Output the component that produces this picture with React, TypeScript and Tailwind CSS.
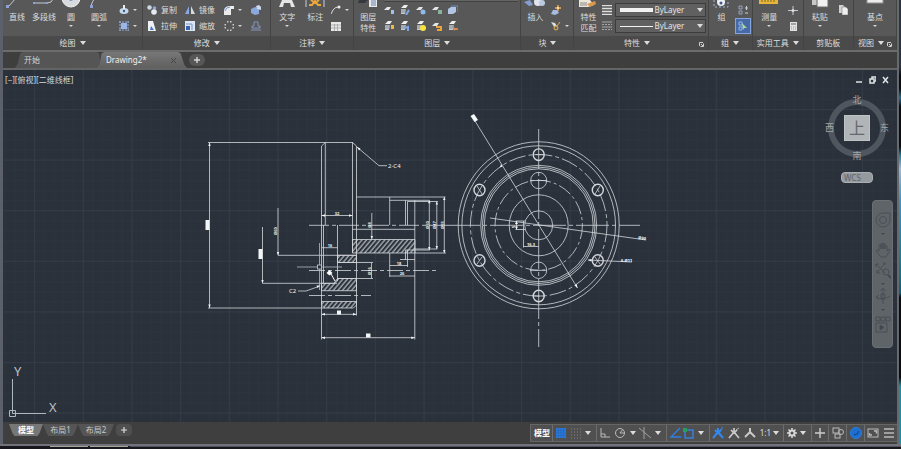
import type { ReactNode } from 'react';

const INK = '#d4d8dc';

function Caret() {
  return <span aria-hidden="true" className="h-0 w-0 shrink-0 border-x-2 border-t-2 border-x-transparent border-t-[#d6d6d6]" />;
}

function TitleCaret() {
  return <span aria-hidden="true" className="h-0 w-0 shrink-0 border-x-3 border-t-4 border-x-transparent border-t-[#dcdcdc]" />;
}

function Launcher() {
  return (
    <svg width="5" height="5" viewBox="0 0 5 5" className="absolute right-1 top-1.5" aria-hidden="true">
      <path d="M0.5 0.5H4M0.5 0.5V4M1.5 4.5H4.5V1.5M2 2L4 4" stroke="#cfcfcf" fill="none" />
    </svg>
  );
}

type PanelProps = { title: string; className: string; caret?: boolean; launcher?: boolean; children: ReactNode };

function Panel({ title, className, caret = true, launcher = false, children }: PanelProps) {
  return (
    <section className={`flex shrink-0 grow flex-col border-r border-[#444444] ${className}`}>
      <div className="flex h-9 overflow-hidden bg-[#585858]">{children}</div>
      <h2 className={`relative flex h-3.5 items-center justify-center bg-[#4a4a4a] ${launcher ? 'gap-1 pr-2' : 'gap-1'}`}>
        {title}
        {caret && <TitleCaret />}
        {launcher && <Launcher />}
      </h2>
    </section>
  );
}

type BigProps = { label: string; second?: string; caret?: boolean; className?: string; children: ReactNode };

function Big({ label, second, caret = false, className = 'w-7', children }: BigProps) {
  return (
    <button type="button" className={`flex shrink-0 flex-col items-center whitespace-nowrap ${className}`}>
      <svg width="24" height="11" viewBox="0 0 24 11" className="shrink-0" aria-hidden="true">{children}</svg>
      <span className="leading-3">{label}</span>
      {second && <span className="leading-2.5">{second}</span>}
      {caret && <span className="flex h-1 items-end"><Caret /></span>}
    </button>
  );
}

type SmallProps = { name: string; text?: string; caret?: boolean; active?: boolean; children: ReactNode };

function Small({ name, text, caret = false, active = false, children }: SmallProps) {
  return (
    <button type="button" aria-label={name} className={`flex h-4 items-center gap-1 whitespace-nowrap ${active ? 'border border-[#86a5dc] bg-[#4769a8] px-0.5' : ''}`}>
      <svg width="10" height="10" viewBox="0 0 10 10" className="shrink-0" aria-hidden="true">{children}</svg>
      {text}
      {caret && <Caret />}
    </button>
  );
}

function Column({ className = '', children }: { className?: string; children: ReactNode }) {
  return <div className={`flex shrink-0 flex-col items-start pt-0.5 ${className}`}>{children}</div>;
}

function Stack({ accent }: { accent: ReactNode }) {
  return (
    <>
      <path d="M1 3L4 0H8L6 3Z" fill="#eceff3" />
      <path d="M1 4H6L5 9H1Z" fill="#c3c9d1" />
      <path d="M1 5H6M1 7H5" stroke="#6d737c" strokeWidth="0.7" fill="none" />
      {accent}
    </>
  );
}

function Sheet({ accent }: { accent: ReactNode }) {
  return (
    <>
      <path d="M0 5L3 2H7L5 5Z" fill="#e2e6ea" />
      {accent}
    </>
  );
}

function LineSelect({ name, thick }: { name: string; thick: boolean }) {
  return (
    <label className="flex h-3.5 items-center gap-0.5 border border-[#3c3c3c] bg-[#606060] pl-1 pr-0.5">
      <span aria-hidden="true" className={`grow bg-[#f2f2f2] ${thick ? 'h-1' : 'h-px'}`} />
      <select aria-label={name} className="w-8 appearance-none bg-transparent leading-3 text-[#e6e6e6] outline-none">
        <option>ByLayer</option>
      </select>
      <span className="w-1.5" />
      <TitleCaret />
    </label>
  );
}

function Ribbon() {
  return (
    <header className="flex border-b-2 border-[#6c6c6c] text-[#dedede]">
      <Panel title="绘图" className="basis-[140px]">
        <Big label="直线"><path d="M3 7L12 -3" stroke="#c4cad6" /><rect x="1" y="5" width="3" height="3" fill="#8ca2d4" /></Big>
        <Big label="多段线" className="w-[26px]"><path d="M1 3H15Q20 3 21 -1" stroke="#c4cad6" fill="none" /><rect x="1" y="2" width="2" height="2" fill="#8ca2d4" /><rect x="14" y="2" width="2" height="2" fill="#8ca2d4" /></Big>
        <Big label="圆" caret><circle cx="12" cy="-2" r="9" fill="#d8dade" stroke="#f0f0f0" /><circle cx="12" cy="-1" r="2" fill="#7d95cf" /></Big>
        <Big label="圆弧" caret><path d="M4 6Q5 1 9 -3" stroke="#c4cad6" fill="none" /><rect x="3" y="5" width="3" height="3" fill="#8ca2d4" /></Big>
        <Column className="pl-1.5">
          <Small name="椭圆" caret><ellipse cx="5" cy="6" rx="4.5" ry="3" fill="#c6d8e8" /><circle cx="5" cy="6" r="1.2" fill="#3c5f96" /><path d="M5 0V4" stroke="#e6edf5" strokeWidth="2" /></Small>
          <Small name="图案填充" caret><rect x="2" y="2" width="6" height="6" fill="#9ab6e8" /><path d="M1 0V10M9 0V10M0 1H10M0 9H10" stroke="#8fabdc" strokeDasharray="2 1" /></Small>
        </Column>
      </Panel>

      <Panel title="修改" className="basis-[128px]">
        <Column className="w-[42px] pl-1">
          <Small name="复制" text="复制"><circle cx="2.5" cy="2.5" r="2.3" fill="#cdd6e3" /><circle cx="7.5" cy="3" r="1.8" fill="#8aa8dc" /><circle cx="7" cy="7" r="2.8" fill="#e6ebf2" /></Small>
          <Small name="拉伸" text="拉伸"><path d="M1 0H6L9 10H1Z" fill="#eef1f5" /><path d="M4 5L7 9H3Z" fill="#4c74c2" /></Small>
        </Column>
        <Column className="w-[39px]">
          <Small name="镜像" text="镜像"><path d="M4 1V9H0Z" fill="#88a9e2" /><path d="M6 1V9H10Z" fill="#d7dbe1" /></Small>
          <Small name="缩放" text="缩放"><rect x="0" y="0" width="10" height="10" fill="#dbe5f6" /><rect x="1" y="5" width="4" height="4" fill="#3762b0" /><path d="M1 3H7V9" stroke="#7394cc" fill="none" /></Small>
        </Column>
        <Column className="w-[27px]">
          <Small name="圆角" caret><path d="M0 10V5Q1 1 6 1H10V4H7V10Z" fill="#ebebeb" /><path d="M1 6Q2 2 6 2" stroke="#7195d6" fill="none" /></Small>
          <Small name="阵列" caret><g fill="#cccccc"><rect x="3" y="0" width="1.5" height="1.5" /><rect x="6" y="0" width="1.5" height="1.5" /><rect x="0.5" y="3" width="1.5" height="1.5" /><rect x="8.500" y="3" width="1.5" height="1.5" /><rect x="0.5" y="6" width="1.5" height="1.5" /><rect x="8.5" y="6" width="1.5" height="1.5" /><rect x="3" y="8.500" width="1.5" height="1.5" /><rect x="6" y="8.5" width="1.5" height="1.5" /></g></Small>
        </Column>
        <Column>
          <Small name="分解"><path d="M0 4L4 2L8 4V9L4 10L0 8Z" fill="#8aa8dc" /><path d="M5 1L8 0L10 2V5L6 4Z" fill="#ced9ec" /></Small>
          <Small name="偏移"><path d="M3 1H7V5H9V7H1V5H3Z" stroke="#8495c0" fill="none" /><path d="M0 9H10" stroke="#8495c0" /></Small>
        </Column>
      </Panel>

      <Panel title="注释" className="basis-[83px]">
        <Big label="文字" caret className="w-8"><path d="M4 7L10 -7H14L20 7H16L15 3H9L8 7Z" fill="#e4e4e4" /></Big>
        <Big label="标注" className="w-6"><path d="M3 -2V7M21 -2V7" stroke="#c8cdd5" /><path d="M6 5H9L12 1L15 5H18M8 0L12 3L16 0" stroke="#eaa83c" strokeWidth="2" fill="none" /></Big>
        <Column className="pl-1">
          <Small name="引线" caret><path d="M0 9L2 5Q4 2 7 2" stroke="#dadada" fill="none" /><circle cx="8" cy="2" r="1.5" fill="#eeeeee" /></Small>
          <Small name="表格"><rect y="1" width="10" height="9" fill="#e9e9e9" /><path d="M0 4H10M0 7H10M3.5 3V10M6.5 3V10" stroke="#989898" strokeWidth="0.7" /></Small>
        </Column>
      </Panel>

      <Panel title="图层" className="basis-[167px]">
        <Big label="图层" second="特性"><path d="M3 0H12L9 3H2Z" fill="#35383d" /><rect x="13" y="-3" width="8" height="10" fill="#e6e8eb" /><path d="M15 1H20M15 3H20M15 5H20" stroke="#6984ad" /></Big>
        <div className="grow pl-0.5">
          <div className="mr-0.5 h-0.5 border-b border-[#424242] bg-[#656565]" />
          <div className="flex w-20 flex-wrap gap-x-1.5">
            <Small name="关闭图层"><Sheet accent={<rect x="7" y="5" width="3" height="4" fill="#9fc3ee" />} /></Small>
            <Small name="隔离"><Stack accent={<path d="M6 10L9 5" stroke="#7ea7e5" strokeWidth="2" />} /></Small>
            <Small name="冻结"><Sheet accent={<circle cx="7" cy="7" r="2.5" fill="#92b9ec" />} /></Small>
            <Small name="锁定"><Sheet accent={<rect x="6" y="5" width="4" height="4" fill="#87b39f" />} /></Small>
            <Small name="置为当前"><path d="M0 4L3 2H8V7L5 9H0Z" fill="#b2c5e4" /><path d="M3 1H10V7" stroke="#6b8fc9" fill="none" /></Small>
            <Small name="打开图层"><Stack accent={<rect x="7" y="4" width="3" height="4" fill="#f0b847" />} /></Small>
            <Small name="取消隔离"><Stack accent={<path d="M4 7L8 6V10" stroke="#7ea7e5" strokeWidth="2" fill="none" />} /></Small>
            <Small name="解冻"><Stack accent={<circle cx="7" cy="7" r="3" fill="#f8e33e" />} /></Small>
            <Small name="解锁"><Sheet accent={<path d="M4 6H9V9H5" stroke="#eaa63a" strokeWidth="2" fill="none" />} /></Small>
            <Small name="匹配图层"><Stack accent={<path d="M5 7L10 8L6 9Z" stroke="#e18b52" fill="#e18b52" />} /></Small>
          </div>
        </div>
      </Panel>

      <Panel title="块" className="basis-[53px]">
        <Big label="插入"><path d="M1 2L7 0L10 5L6 6Z" fill="#849dcc" /><circle cx="15" cy="2" r="4" fill="#dfe5ef" /><circle cx="19" cy="3" r="3" fill="#bdc9df" /></Big>
        <Column className="pl-0.5">
          <Small name="创建"><path d="M0 9L2 5H6L8 8L4 10Z" fill="#a7bce2" /><path d="M7 0V6M4 3H10" stroke="#f4a94b" strokeWidth="1.5" /><circle cx="7" cy="3" r="1" fill="#fff3d0" /></Small>
          <Small name="编辑块" caret><path d="M0 1L4 2L7 7L5 9Z" fill="#d9dde4" /><circle cx="5" cy="7" r="2" stroke="#e6af4f" fill="#656565" /><path d="M6 5L9 1" stroke="#e6af4f" /></Small>
        </Column>
      </Panel>

      <Panel title="特性" className="basis-[134px]" launcher>
        <Big label="特性" second="匹配"><path d="M3 0H14L18 5L12 7H3Z" fill="#eee7d9" /><path d="M4 3H11M4 5H11" stroke="#8a8a8a" /><path d="M11 4L19 1L20 4L14 7Z" fill="#dc984c" /></Big>
        <Column className="w-[13px]">
          <Small name="线宽列表"><path d="M0 0.5H10M0 3.500H10M0 6.500H10M0 9.500H10" stroke="#dfdfdf" strokeWidth="1.5" /></Small>
          <Small name="线型列表"><path d="M0 1H10M0 6H10" stroke="#a8a8a8" /><path d="M0 3.5H10M0 8.5H10" stroke="#a8a8a8" strokeDasharray="2 1" /></Small>
        </Column>
        <div className="flex grow flex-col gap-0.5 pr-0.5 pt-[3px]">
          <LineSelect name="线宽" thick />
          <LineSelect name="线型" thick={false} />
        </div>
      </Panel>

      <Panel title="组" className="basis-[44px]">
        <Big label="组" className="w-[26px]"><rect x="4" y="-4" width="14" height="11" stroke="#a0b4dc" strokeDasharray="2 2" fill="none" /><circle cx="11" cy="2" r="4" fill="#eceff3" /><circle cx="11" cy="3" r="1.5" fill="#445988" /></Big>
        <Column>
          <div className="pl-[3px]"><Small name="解除编组"><path d="M1 1H4V4H1ZM1 6H4V9H1Z" stroke="#94a2bf" fill="none" /><path d="M7 3H10M8.5 1V5M7 8H10" stroke="#c9cdd4" /></Small></div>
          <Small name="组选择" active><path d="M1 1H4V4H1ZM1 6H4V9H1Z" stroke="#8cb8e8" fill="none" /><path d="M4 2L9 7L6 7L5 9Z" fill="#a8df99" /></Small>
        </Column>
      </Panel>

      <Panel title="实用工具" className="basis-[51px]">
        <Big label="测量" caret className="w-[33px]"><rect x="2" y="-1" width="19" height="5" fill="#e7b638" /><path d="M5 -1V2M8 -1V2M11 -1V2M14 -1V2M17 -1V2" stroke="#7b6529" /></Big>
        <Column className="pl-0.5">
          <Small name="点坐标"><path d="M5 1V10M0 5.5H10" stroke="#c5c9cf" /><circle cx="5" cy="5.5" r="1.5" fill="#dcdcdc" /></Small>
          <Small name="快速计算器"><rect x="2" y="1" width="7" height="9" fill="#e2e2e2" /><path d="M3 3H8" stroke="#606060" /><path d="M3 6H8M3 8H8" stroke="#9a9a9a" strokeDasharray="1 1" /></Small>
        </Column>
      </Panel>

      <Panel title="剪贴板" className="basis-[50px]" caret={false}>
        <Big label="粘贴" caret className="w-8"><rect x="4" y="-4" width="11" height="9" fill="#c8c8c8" /><rect x="9" y="-2" width="11" height="9" fill="#f0f0f0" stroke="#686868" /></Big>
        <Column className="pl-0.5"><Small name="复制剪裁"><path d="M1 0H5L7 2V8H1Z" fill="#d0d0d0" /><path d="M4 2H8L10 4V10H4Z" fill="#eeeeee" stroke="#6a6a6a" strokeWidth="0.5" /></Small></Column>
      </Panel>

      <Panel title="视图" className="basis-[43px]" launcher>
        <Big label="基点" caret className="grow"><rect x="4" y="-3" width="16" height="6" fill="#ececec" stroke="#909090" /></Big>
      </Panel>
    </header>
  );
}

function FileTabs() {
  return (
    <nav aria-label="图形" className="flex h-[18px] shrink-0 items-end border-b-2 border-[#646464] bg-[#3e3e3e] pl-3 text-[#d4d4d4]">
      <button type="button" className="flex h-4 w-[86px] items-center bg-[#555555] pl-[9px] [clip-path:polygon(0_100%,3%_75%,6%_10%,9%_0,95%_0,98%_10%,100%_100%)]">开始</button>
      <button type="button" className="-ml-1 flex h-4 w-[90px] items-center justify-between bg-linear-to-b from-[#777777] to-[#606060] pl-[9px] pr-[11px] text-[#f0f0f0] [clip-path:polygon(0_100%,3%_75%,5%_10%,8%_0,90%_0,93%_10%,97%_80%,100%_100%)]">
        Drawing2*
        <svg width="5" height="5" viewBox="0 0 5 5" aria-hidden="true"><path d="M0 0L5 5M5 0L0 5" stroke="#454545" /></svg>
      </button>
      <button type="button" aria-label="新图形" className="ml-0.5 flex h-3 w-4 items-center justify-center self-center rounded-md bg-[#575757]">
        <svg width="6" height="6" viewBox="0 0 6 6" aria-hidden="true"><path d="M3 0V6M0 3H6" stroke="#d8d8d8" strokeWidth="1.4" /></svg>
      </button>
    </nav>
  );
}

function SideView() {
  return (
    <g>
      <g fill="url(#hatch)" stroke={INK} strokeWidth="0.8">
        <path d="M352.5 239.5H415V253H352.5Z" />
        <path d="M337.5 255.3H356.5V262.5H337.5Z" />
        <path d="M321.5 283.3H334L337.5 278.5H356.5V290.7H321.5Z" />
        <path d="M321.5 301.5H356.5V305L353.5 308H324.5L321.5 305Z" />
      </g>
      <path
        d="M208 142.5H353M208 308H325M209.5 142.5V308M321.5 146V339.5M325.3 142.5V225M321.5 146L325.3 142.5M352.5 142.5V253M356.5 146V315.5M352.5 142.5L356.5 146
        M321.5 215.5H352.5M323.5 225V283M337.5 225V281M352.5 229.3H415M356.5 197H445.5M389.7 197V225M389.7 200.3H429.5M405.5 200.3V225M407.5 201.3V225M407.5 201.5H438M414.8 200V339.5
        M429.3 200.3V250M436.8 201.5V249M444.3 197V253M405.5 250H430M415 249H437.5M415 253H446
        M371.8 213V239M278 208V255.3H356.5M262.5 227V283.3H337M321.5 247.7H337.5
        M337.5 262.5H373M337.5 278.5H373M371.5 262.5V278.5M321.5 314.3H356.5M321.5 337.7H415
        M389.7 253V277M405.5 250V260M407.5 250V267M400 259.5H415M389.7 265.5H407.5M389.7 276H415
        M357 147L379 165.7H387M298 291H306L320 286"
        fill="none" stroke={INK} strokeWidth="0.8"
      />
      <path d="M309 225.3H447" stroke={INK} strokeWidth="0.8" strokeDasharray="20 3 4 3" />
      <path d="M309 270.5H439M309 295.5H371" stroke={INK} strokeWidth="0.8" strokeDasharray="16 3 4 3" />
      <path d="M319.5 243V290M297 267H342" stroke="#b5bac0" strokeWidth="0.8" />
      <rect x="317.5" y="265" width="4" height="4" fill="#2a313b" stroke="#c8ccd0" strokeWidth="0.8" />
      <path d="M329.5 270L332.5 273L329.5 275.5L326.5 273Z" fill="#ffffff" />
      <path d="M331 274L335 281" stroke="#ffffff" />
      <g fill="#f4f5f6">
        <rect x="205.5" y="220" width="4" height="10" />
        <rect x="258.5" y="249" width="4" height="10" />
        <rect x="337" y="310.5" width="4" height="4" />
        <rect x="366" y="333.5" width="4.5" height="4" />
        <path d="M208.3 146L209.5 142.5L210.7 146ZM208.3 304.5L209.5 308L210.7 304.5ZM320 285.5L316.5 285.5L317.5 288ZM357 147L360.5 148.5L359 150.5Z" />
        <path d="M321.5 337.7L325 336.5V338.9ZM414.8 337.7L411.3 336.5V338.9ZM321.5 314.3L325 313.1V315.5ZM356.5 314.3L353 313.1V315.5ZM321.5 215.5L325 214.3V216.7ZM352.5 215.5L349 214.3V216.7Z" />
        <path d="M278 255.3L276.8 252H279.2ZM262.5 283.3L261.3 280H263.7ZM371.8 239L370.6 236H373ZM429.3 250L428.1 247H430.5ZM436.8 249L435.6 246H438ZM444.3 253L443.1 250H445.5ZM429.3 200.3L428.1 203.3H430.5ZM436.8 201.5L435.6 204.5H438ZM444.3 197L443.1 200H445.5Z" />
      </g>
      <g fill="#eef0f2" fontSize="6">
        <text x="388" y="168">2-C4</text>
        <text x="289" y="293">C2</text>
      </g>
      <g fill="#eef0f2" fontSize="4" fontWeight="bold" textAnchor="middle">
        <text x="337" y="215">32</text>
        <text x="330" y="247">16</text>
        <text x="399" y="265">18</text>
        <text x="402" y="275">26</text>
        <text transform="translate(277 231) rotate(-90)">Ø60</text>
        <text transform="translate(371 225) rotate(-90)">Ø8</text>
        <text transform="translate(371 271) rotate(-90)">Ø16</text>
        <text transform="translate(429 225) rotate(-90)">Ø50</text>
        <text transform="translate(436 225) rotate(-90)">Ø47</text>
        <text transform="translate(444 225) rotate(-90)">Ø55</text>
      </g>
    </g>
  );
}

const RINGS = [
  [80.5, 83.5],
  [76.8, 79.5],
  [58, 60],
  [56.3, 58.2],
  [54.5, 56.5],
  [29.5, 30.5],
  [14, 14.5],
];

const BOLTS = [
  [538.7, 154.7],
  [479.5, 190],
  [597.8, 190],
  [479.5, 260.5],
  [597.8, 260.5],
  [538.7, 296],
];

function FrontView() {
  return (
    <g fill="none" stroke={INK} strokeWidth="0.8">
      {RINGS.map(([rx, ry]) => (
        <ellipse key={rx} cx="538.7" cy="225.3" rx={rx} ry={ry} />
      ))}
      <ellipse cx="538.7" cy="225.3" rx="68.3" ry="70.8" strokeDasharray="17 3 4 3" />
      <ellipse cx="538.7" cy="225.3" rx="43.7" ry="45" strokeDasharray="14 3 3 3" />
      {BOLTS.map(([cx, cy]) => (
        <ellipse key={`${cx}-${cy}`} cx={cx} cy={cy} rx="5.5" ry="5.8" strokeWidth="1.4" />
      ))}
      <path d="M477 186L482 194M600 186L595 194M477 264L482 257M600 264L595 257M534 154.7H544M534 296H544M530 180.5H547M530 270.3H547" />
      <ellipse cx="538.7" cy="180.5" rx="8" ry="8.2" />
      <ellipse cx="538.7" cy="270.3" rx="8" ry="8.2" />
      <path d="M538.7 129V347" strokeDasharray="40 3 4 3" />
      <path d="M447 225.3H640" strokeDasharray="33 3 4 3" />
      <path d="M475 121L577.5 288M490 218L646 240M588 260L632 262" />
      <path d="M525 221H515.5M525 229.5H515.5M516.5 221V229.5M523.5 221V247.5M523.5 246.5H538.7" />
      <g fill="#f6f7f8" stroke="none">
        <path d="M470.5 116L474 114L478 120L474.5 122Z" />
        <path d="M577.5 288L574.5 285.5L576.7 284ZM588 260L591.5 259V261.5ZM501 164L500 167.5L502.5 166.5Z" />
        <path d="M516.5 221L515 224H518ZM516.5 229.5L515 226.5H518Z" />
        <g fontSize="4" fontWeight="bold">
          <text transform="translate(638 239) rotate(8)">Ø90</text>
          <text x="621" y="262">6-Ø11</text>
          <text x="527" y="246">16.3</text>
          <text transform="translate(515 228) rotate(-90)">5</text>
        </g>
      </g>
    </g>
  );
}

function ViewCube() {
  return (
    <div className="flex flex-col items-center text-[9px] leading-3 text-[#a1a6ab]">
      <div className="relative flex h-[68px] w-16 items-center justify-center">
        <div className="h-[58px] w-[58px] rounded-full border-6 border-[#50565e]" />
        <span className="absolute top-0">北</span>
        <span className="absolute bottom-0">南</span>
        <span className="absolute left-0">西</span>
        <span className="absolute right-0">东</span>
        <button type="button" className="absolute h-[26px] w-[26px] border border-[#bfc3c6] bg-[#b2b5b8] text-base leading-6 text-[#65686c]">上</button>
      </div>
      <button type="button" className="mt-2.5 flex h-[11px] w-8 items-center rounded-sm border border-[#abafb3] bg-[#959a9e] pl-0.5 text-[8px] text-[#5f646a]">WCS</button>
    </div>
  );
}

function NavButton({ name, caret = true, children }: { name: string; caret?: boolean; children: ReactNode }) {
  return (
    <button type="button" aria-label={name} className="flex flex-col items-center gap-1">
      <svg width="16" height="18" viewBox="0 0 16 18" fill="none" stroke="#444a50" strokeWidth="0.8" aria-hidden="true">{children}</svg>
      {caret && <span className="h-0 w-0 border-x-2 border-t-2 border-x-transparent border-t-[#41464c]" />}
    </button>
  );
}

function NavigationBar() {
  return (
    <aside aria-label="导航栏" className="flex w-[21px] flex-col items-center rounded-sm border border-[#6b7075] bg-[#5f6469] pb-3.5 pt-2.5">
      <NavButton name="控制盘"><path d="M8 2A7 7 0 1 0 15 9V2Z" /><circle cx="8" cy="9" r="3.5" /></NavButton>
      <div className="h-1.5" />
      <NavButton name="平移" caret={false}><path d="M4 10V4Q5 2 6 4V8V3Q7 1 8 3V8V3Q9 1 10 3V8V5Q11 3 12 5V10L14 8Q16 8 14 11L11 16H6L1 10Q2 8 4 10" /></NavButton>
      <div className="h-0.5" />
      <NavButton name="缩放"><path d="M1 3L10 12M10 2L2 12M1 6V3H4M8 2H10V4M2 9V12H5" /><circle cx="11" cy="11" r="3" /><path d="M13 14L16 17" strokeWidth="2" /></NavButton>
      <div className="h-0.5" />
      <NavButton name="动态观察"><path d="M8 1V17M5 4L8 1L11 4M6 7H10V12H6ZM1 10Q8 14 15 9M1 10L4 8M1 10L4 13" /></NavButton>
      <div className="h-1" />
      <NavButton name="ShowMotion" caret={false}><path d="M1 2H5V6H1ZM6 2H10V6H6ZM11 2H15V6H11ZM1 8H12V17H1Z" /><path d="M5 10L9 12.5L5 15Z" fill="#41464c" /></NavButton>
    </aside>
  );
}

function DrawingCanvas() {
  return (
    <main className="relative min-h-0 grow overflow-hidden bg-[#2a313b] text-[#d3d7da]">
      <svg width="100%" height="100%" className="absolute inset-0" aria-label="法兰零件图">
        <defs>
          <pattern id="minor" width="9.74" height="10.12" patternUnits="userSpaceOnUse" x="31" y="39">
            <path d="M0.5 0V10.12M0 0.5H9.74" stroke="#2c343e" strokeWidth="0.8" />
          </pattern>
          <pattern id="major" width="48.7" height="50.6" patternUnits="userSpaceOnUse" x="31" y="39">
            <path d="M0.5 0V50.6M0 0.5H48.7" stroke="#323b47" />
          </pattern>
          <pattern id="hatch" width="3.5" height="3.5" patternUnits="userSpaceOnUse" patternTransform="rotate(40)">
            <path d="M1 0V3.5" stroke="#c6cace" strokeWidth="1.1" />
          </pattern>
        </defs>
        <rect width="100%" height="100%" fill="url(#minor)" />
        <rect width="100%" height="100%" fill="url(#major)" />
        <g transform="translate(-3 -70)">
          <SideView />
          <FrontView />
        </g>
      </svg>

      <div className="relative flex h-5 items-center justify-between pl-0.5 pr-2">
        <span>[−][俯视][二维线框]</span>
        <div className="flex items-center gap-1.5">
          {[
            { name: '最小化', d: 'M0 6H6' },
            { name: '还原', d: 'M1 3H5V7H1ZM3 3V1H7V5H5' },
            { name: '关闭', d: 'M1 1L6 7M6 1L1 7' },
          ].map((c) => (
            <button key={c.name} type="button" aria-label={c.name}>
              <svg width="7" height="8" viewBox="0 0 7 8" fill="none" stroke="#e2e4e6" strokeWidth="1.5" aria-hidden="true"><path d={c.d} /></svg>
            </button>
          ))}
        </div>
      </div>

      <div className="absolute right-2 top-6"><ViewCube /></div>
      <div className="absolute right-1 top-[130px]"><NavigationBar /></div>

      <svg width="60" height="60" viewBox="0 0 60 60" className="absolute bottom-0 left-1" fill="none" stroke="#aeb6bf" aria-label="坐标系图标">
        <path d="M5.5 17V51.5H39M2.5 48.5H8.5V54.5H2.5Z" />
        <g fill="#b9c0c8" stroke="none" fontSize="13">
          <text x="7" y="14">Y</text>
          <text x="42" y="50">X</text>
        </g>
      </svg>
    </main>
  );
}

function StatusIcon({ name, children }: { name: string; children: ReactNode }) {
  return (
    <button type="button" aria-label={name}>
      <svg width="12" height="12" viewBox="0 0 12 12" fill="none" stroke="#b9b9b9" aria-hidden="true">{children}</svg>
    </button>
  );
}

function StatusCell({ className, children }: { className: string; children: ReactNode }) {
  return <div className={`flex h-full shrink-0 items-center border-l border-[#6e6e6e] ${className}`}>{children}</div>;
}

function Drop({ name }: { name: string }) {
  return <button type="button" aria-label={name} className="flex h-3 items-center px-px"><TitleCaret /></button>;
}

const PERSON = 'M6 1V5L1 11M6 5L11 11M3 3L6 6L9 3';

function StatusBar() {
  const slant = '[clip-path:polygon(0_0,100%_0,90%_75%,84%_100%,16%_100%,10%_75%)]';
  return (
    <footer className="flex h-[22px] shrink-0 items-center justify-between bg-[#3f3f3f] text-[#c9c9c9]">
      <nav aria-label="布局" className="flex h-full items-start pl-1.5 pt-0.5">
        <button type="button" className={`flex h-3 w-[34px] items-center justify-center bg-[#777777] font-bold text-white ${slant}`}>模型</button>
        <button type="button" className={`flex h-3 w-[35px] items-center justify-center bg-[#555555] ${slant}`}>布局1</button>
        <button type="button" className={`flex h-3 w-[36px] items-center justify-center bg-[#555555] ${slant}`}>布局2</button>
        <button type="button" aria-label="新建布局" className="ml-0.5 flex h-3 w-4 items-center justify-center rounded-sm bg-[#4f4f4f] text-[#dddddd]">
          <svg width="6" height="6" viewBox="0 0 6 6" aria-hidden="true"><path d="M3 0V6M0 3H6" stroke="currentColor" strokeWidth="1.2" /></svg>
        </button>
      </nav>
      <div className="flex h-[18px] items-center border border-r-0 border-[#666666] bg-[#505050]">
        <button type="button" className="w-[21px] pl-px text-center font-bold text-white">模型</button>
        <StatusCell className="w-11 justify-between pl-0.5 pr-1">
          <StatusIcon name="栅格"><rect x="1" y="1" width="10" height="10" fill="#2a79dc" stroke="none" /><path d="M3.5 1V11M6 1V11M8.5 1V11M1 3.5H11M1 6H11M1 8.5H11" stroke="#2461ad" strokeWidth="0.5" /></StatusIcon>
          <StatusIcon name="捕捉"><path d="M1 2H11M1 5H11M1 8H11M1 11H11" stroke="#828282" strokeDasharray="1 2" /></StatusIcon>
          <Drop name="捕捉选项" />
        </StatusCell>
        <StatusCell className="w-[70px] justify-between pl-0.5 pr-1">
          <StatusIcon name="正交"><path d="M2 1V10H11M6 10V7H2" /></StatusIcon>
          <StatusIcon name="极轴追踪"><circle cx="6" cy="6" r="4.5" /><path d="M6 6H11M6 6L9 2" /></StatusIcon>
          <Drop name="极轴选项" />
          <StatusIcon name="等轴测草图"><path d="M0 1L12 11M5 0V12" stroke="#a0a0a0" /></StatusIcon>
          <Drop name="等轴测选项" />
        </StatusCell>
        <StatusCell className="w-[43px] justify-between pl-0.5 pr-1">
          <StatusIcon name="对象捕捉追踪"><path d="M11 1L2 10H12" stroke="#2f7fe2" strokeWidth="1.4" /></StatusIcon>
          <StatusIcon name="对象捕捉"><rect x="2" y="3" width="8" height="8" stroke="#3583e0" strokeWidth="1.4" /><rect x="0" y="1" width="4" height="4" fill="#279c60" stroke="none" /></StatusIcon>
          <Drop name="对象捕捉选项" />
        </StatusCell>
        <StatusCell className="w-[74px] justify-between pl-0.5 pr-1">
          <StatusIcon name="注释可见性"><path d={PERSON} stroke="#3388ee" strokeWidth="2" /><path d="M8 3Q11 3 10 0" stroke="#3388ee" /></StatusIcon>
          <StatusIcon name="自动缩放"><path d={PERSON} stroke="#c8c8c8" strokeWidth="1.7" /><path d="M8 3L11 1" /></StatusIcon>
          <StatusIcon name="注释比例"><path d="M6 1V5L1 10M6 5L11 10M6 5V7" stroke="#c8c8c8" strokeWidth="2" /></StatusIcon>
          <button type="button" className="flex items-center gap-0.5 text-[#dedede]">1:1<TitleCaret /></button>
        </StatusCell>
        <StatusCell className="w-7 justify-between pl-0.5 pr-1">
          <StatusIcon name="切换工作空间"><circle cx="6" cy="6" r="2.5" stroke="#d8d8d8" strokeWidth="2" /><path d="M6 1V3M6 9V11M1 6H3M9 6H11M2.5 2.5L4 4M8 8L9.5 9.5M9.5 2.5L8 4M4 8L2.5 9.5" stroke="#d8d8d8" strokeWidth="1.5" /></StatusIcon>
          <Drop name="工作空间选项" />
        </StatusCell>
        <StatusCell className="w-[17px] justify-center"><StatusIcon name="注释监视器"><path d="M6 1V11M1 6H11" stroke="#cdcdcd" strokeWidth="1.4" /></StatusIcon></StatusCell>
        <StatusCell className="w-[18px] justify-center"><StatusIcon name="隔离对象"><rect x="1" y="1" width="6" height="5" /><circle cx="9" cy="5" r="2.5" /><rect x="3" y="7" width="5" height="4" /></StatusIcon></StatusCell>
        <StatusCell className="w-[18px] justify-center"><StatusIcon name="硬件加速"><circle cx="6" cy="6" r="5.5" fill="#1c6fd0" stroke="#2b7fe0" /><path d="M4 8Q8 8 9 4" stroke="#153f78" /></StatusIcon></StatusCell>
        <StatusCell className="w-[33px] justify-around">
          <StatusIcon name="全屏显示"><rect x="1" y="2" width="10" height="8" /><path d="M7 4H9.5V6.5M5 8H2.5V6" strokeWidth="1.5" /></StatusIcon>
          <StatusIcon name="自定义"><path d="M1 2H11M1 6H11M1 10H11" strokeWidth="1.4" /></StatusIcon>
        </StatusCell>
      </div>
    </footer>
  );
}

export default function App() {
  return (
    <div className="flex h-screen flex-col overflow-hidden bg-[#17171d] font-['Noto_Sans','Noto_Sans_CJK_SC',sans-serif] text-[8px] leading-3">
      <div className="flex min-h-0 grow">
        <div className="w-[3px] shrink-0 bg-[#5b606a]" />
        <div className="flex min-w-0 grow flex-col">
          <Ribbon />
          <FileTabs />
          <DrawingCanvas />
          <StatusBar />
        </div>
        <div className="w-0.5 shrink-0 bg-[#66696d]" />
        <div className="w-0.5 shrink-0 bg-[linear-gradient(#2b3542_0%,#2b3542_15%,#0a0c10_17%,#0a0c10_20%,#1d6f94_22%,#0a0c10_24%,#0a0c10_33%,#1a7f9e_35%,#9db9d6_38%,#3f94c0_45%,#157089_62%,#0d5f77_66%,#0a0c10_67%,#0a0c10_85%,#1791a8_87%,#1791a8_100%)]" />
      </div>
      <div className="h-0.5 shrink-0 bg-[#71727b]" />
      <div className="flex h-[3px] shrink-0 items-start gap-0.5 pl-[50px]">
        <div className="h-px w-[38px] bg-[#aaa59b]" />
        <div className="h-px w-[38px] bg-[#aaa59b]" />
        <div className="h-px grow bg-[#50525f]" />
      </div>
    </div>
  );
}
